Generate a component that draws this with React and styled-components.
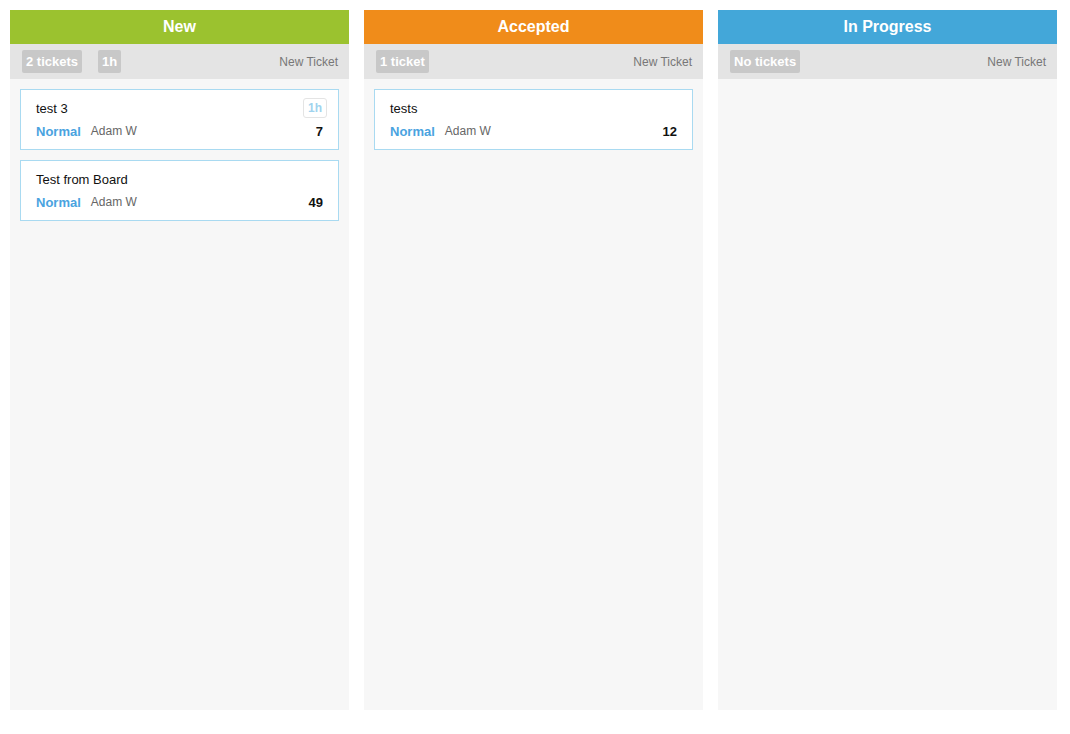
import styled, { createGlobalStyle } from "styled-components";

const GlobalStyle = createGlobalStyle`
  html, body {
    margin: 0;
    padding: 0;
    background: #ffffff;
    font-family: "Liberation Sans", Arial, sans-serif;
  }
`;

const columns = [
  {
    title: "New",
    color: "#9bc22f",
    count: "2 tickets",
    time: "1h",
    tickets: [
      { title: "test 3", priority: "Normal", owner: "Adam W", id: 7, time: "1h" },
      { title: "Test from Board", priority: "Normal", owner: "Adam W", id: 49 },
    ],
  },
  {
    title: "Accepted",
    color: "#f08c1a",
    count: "1 ticket",
    tickets: [{ title: "tests", priority: "Normal", owner: "Adam W", id: 12 }],
  },
  {
    title: "In Progress",
    color: "#43a7d9",
    count: "No tickets",
    tickets: [],
  },
];

const Board = styled.div`
  display: grid;
  grid-template-columns: repeat(3, 339px);
  gap: 15px;
  padding: 10px;
  height: 700px;
`;

const Column = styled.section`
  display: flex;
  flex-direction: column;
  background: #f7f7f7;
`;

const ColumnHeader = styled.h2`
  margin: 0;
  height: 34px;
  line-height: 34px;
  text-align: center;
  font-size: 16px;
  font-weight: bold;
  color: #ffffff;
  background: ${(p) => p.$color};
`;

const Toolbar = styled.div`
  display: flex;
  align-items: center;
  gap: 16px;
  height: 35px;
  padding: 0 11px 0 12px;
  background: #e4e4e4;
`;

const Badge = styled.span`
  display: inline-block;
  height: 23px;
  line-height: 23px;
  padding: 0 4px;
  border-radius: 2px;
  background: #c8c8c8;
  color: #ffffff;
  font-size: 13px;
  font-weight: bold;
`;

const NewTicket = styled.a`
  margin-left: auto;
  font-size: 12px;
  color: #777777;
  cursor: pointer;
`;

const CardList = styled.div`
  display: flex;
  flex-direction: column;
  gap: 10px;
  padding: 10px;
`;

const Card = styled.div`
  box-sizing: border-box;
  height: 61px;
  padding: 7px 15px 0 15px;
  background: #ffffff;
  border: 1px solid #a9daf1;
`;

const Row = styled.div`
  display: flex;
  align-items: center;
  height: ${(p) => p.$h}px;
`;

const Title = styled.span`
  font-size: 13px;
  color: #111111;
`;

const TimeTag = styled.span`
  margin-left: auto;
  margin-right: -4px;
  box-sizing: border-box;
  height: 20px;
  line-height: 18px;
  padding: 0 4px;
  border: 1px solid #e4e4e4;
  border-radius: 3px;
  color: #9fd3ee;
  font-size: 12px;
  font-weight: bold;
`;

const Priority = styled.span`
  font-size: 13px;
  font-weight: bold;
  color: #4aa3df;
`;

const Owner = styled.span`
  margin-left: 10px;
  font-size: 12px;
  color: #666666;
`;

const Number = styled.span`
  margin-left: auto;
  font-size: 13px;
  font-weight: bold;
  color: #111111;
`;

const TicketCard = ({ ticket }) => (
  <Card>
    <Row $h={22}>
      <Title>{ticket.title}</Title>
      {ticket.time && <TimeTag>{ticket.time}</TimeTag>}
    </Row>
    <Row $h={24}>
      <Priority>{ticket.priority}</Priority>
      <Owner>{ticket.owner}</Owner>
      <Number>{ticket.id}</Number>
    </Row>
  </Card>
);

export default function App() {
  return (
    <>
      <GlobalStyle />
      <Board>
        {columns.map((col) => (
          <Column key={col.title}>
            <ColumnHeader $color={col.color}>{col.title}</ColumnHeader>
            <Toolbar>
              <Badge>{col.count}</Badge>
              {col.time && <Badge>{col.time}</Badge>}
              <NewTicket>New Ticket</NewTicket>
            </Toolbar>
            <CardList>
              {col.tickets.map((t) => (
                <TicketCard key={t.id} ticket={t} />
              ))}
            </CardList>
          </Column>
        ))}
      </Board>
    </>
  );
}
